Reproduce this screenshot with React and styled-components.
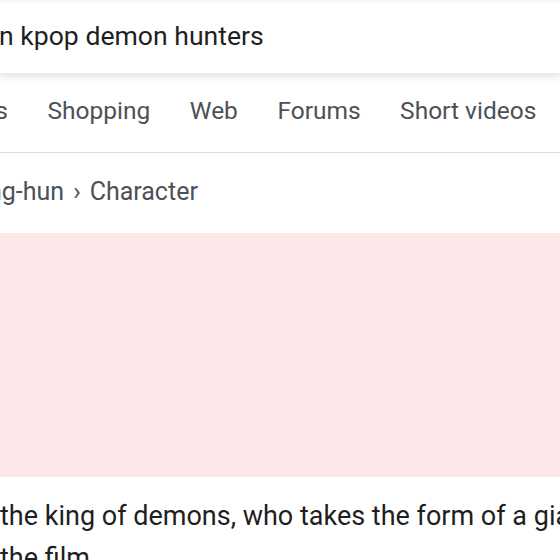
import React from 'react';
import styled, { createGlobalStyle } from 'styled-components';

const Global = createGlobalStyle`
  html, body {
    margin: 0;
    padding: 0;
    background: #ffffff;
    overflow: hidden;
  }
  body {
    font-family: Roboto, "Liberation Sans", Arial, sans-serif;
  }
`;

const Page = styled.div`
  width: 560px;
  height: 560px;
  overflow: hidden;
  background: #f8f8f8;
  display: flex;
  flex-direction: column;
`;

const SearchBar = styled.div`
  margin-top: 2px;
  height: 71px;
  box-sizing: border-box;
  padding-bottom: 4px;
  background: #fff;
  box-shadow: 0 4px 6px rgba(32, 33, 36, 0.12);
  display: flex;
  align-items: center;
  position: relative;
  z-index: 1;
  flex-shrink: 0;
`;

const Query = styled.span`
  font-size: 26.6px;
  color: #1f1f1f;
  white-space: nowrap;
  margin-left: -1px;
`;

const Tabs = styled.div`
  height: 80px;
  box-sizing: border-box;
  padding-bottom: 4px;
  background: #fff;
  display: flex;
  align-items: center;
  gap: 39.5px;
  margin-left: -67px;
  border-bottom: 1px solid #dadce0;
  flex-shrink: 0;
`;

const Tab = styled.span`
  font-size: 24.5px;
  color: #4d5156;
  white-space: nowrap;
`;

const Content = styled.div`
  flex: 1;
  background: #fff;
  display: flex;
  flex-direction: column;
`;

const Crumb = styled.div`
  height: 80px;
  box-sizing: border-box;
  padding-bottom: 4px;
  display: flex;
  align-items: center;
  font-size: 25px;
  color: #4d5156;
  white-space: nowrap;
  margin-left: -12px;
`;

const Sep = styled.span`
  margin: 0 9px;
`;

const Banner = styled.div`
  height: 244px;
  background: #fce8e8;
  flex-shrink: 0;
`;

const Body = styled.p`
  margin: 18px 0 0 0;
  font-size: 27px;
  line-height: 42px;
  color: #1f1f1f;
  white-space: nowrap;
`;

export default function App() {
  return (
    <Page>
      <Global />
      <SearchBar>
        <Query>n kpop demon hunters</Query>
      </SearchBar>
      <Tabs>
        <Tab>Videos</Tab>
        <Tab>Shopping</Tab>
        <Tab>Web</Tab>
        <Tab>Forums</Tab>
        <Tab>Short videos</Tab>
        <Tab>Books</Tab>
      </Tabs>
      <Content>
        <Crumb>
          ng-hun<Sep>›</Sep>Character
        </Crumb>
        <Banner />
        <Body>
          the king of demons, who takes the form of a giant
          <br />
          the film.
        </Body>
      </Content>
    </Page>
  );
}
